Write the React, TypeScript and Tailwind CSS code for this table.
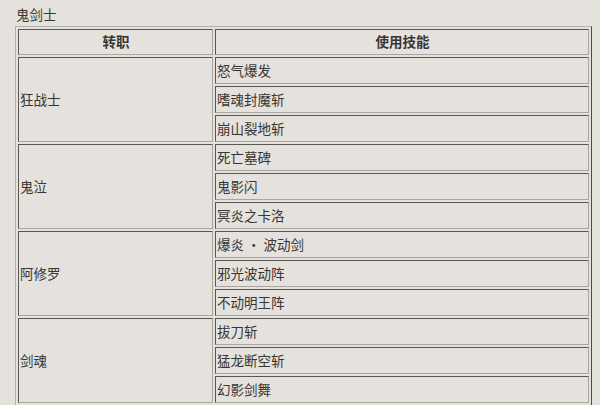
const groups = [
  { job: '狂战士', skills: ['怒气爆发', '嗜魂封魔斩', '崩山裂地斩'] },
  { job: '鬼泣', skills: ['死亡墓碑', '鬼影闪', '冥炎之卡洛'] },
  { job: '阿修罗', skills: ['爆炎 · 波动剑', '邪光波动阵', '不动明王阵'] },
  { job: '剑魂', skills: ['拔刀斩', '猛龙断空斩', '幻影剑舞'] },
];

const cell =
  'border border-t-[#5a5753] border-l-[#5a5753] border-b-[#a9a6a1] border-r-[#a9a6a1] p-0 pl-[1px]';

export default function App() {
  return (
    <div
      className="w-[600px] h-[405px] overflow-hidden bg-[#e5e2dd] text-[#383634] text-[13.5px]"
      style={{ fontFamily: '"Noto Sans CJK SC", "Noto Sans", sans-serif' }}
    >
      <div className="pl-[16px] pt-[6px] h-[26px] leading-[16px]">鬼剑士</div>
      <table className="ml-[15px] w-[577px] border-separate border-spacing-[2px] border border-t-[#b3b0ab] border-l-[#b3b0ab] border-b-[#4e4b47] border-r-[#4e4b47] table-fixed">
        <colgroup>
          <col className="w-[195px]" />
          <col />
        </colgroup>
        <thead>
          <tr>
            <th className={`${cell} h-[26px] text-center font-bold leading-none`}>转职</th>
            <th className={`${cell} h-[26px] text-center font-bold leading-none`}>使用技能</th>
          </tr>
        </thead>
        <tbody>
          {groups.map((g) =>
            g.skills.map((s, i) => (
              <tr key={g.job + s}>
                {i === 0 && (
                  <td rowSpan={3} className={`${cell} align-middle leading-none`}>
                    {g.job}
                  </td>
                )}
                <td className={`${cell} h-[27px] align-middle leading-none`}>{s}</td>
              </tr>
            ))
          )}
        </tbody>
      </table>
    </div>
  );
}
